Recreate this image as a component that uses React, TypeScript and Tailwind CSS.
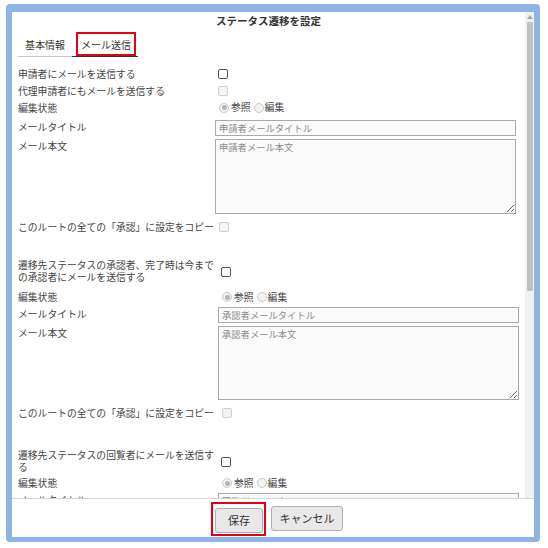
import React from "react";

type Width = "w-[197px]" | "w-[200px]";

// small square checkbox, drawn so the size matches the screenshot
function Check({ disabled = false }: { disabled?: boolean }) {
  return (
    <span
      className={`block w-[10px] h-[10px] rounded-[2px] border ${
        disabled ? "border-[#cfcfcf] bg-[#f4f4f4]" : "border-[#555] bg-white"
      }`}
    />
  );
}

function Radio({ checked = false }: { checked?: boolean }) {
  return (
    <span className="w-[10px] h-[10px] rounded-full border border-[#c9c9c9] bg-[#f3f3f3] flex items-center justify-center">
      {checked && <span className="w-[5px] h-[5px] rounded-full bg-[#b4b4b4]" />}
    </span>
  );
}

function EditState() {
  return (
    <div className="ml-[4px] flex items-center text-[9.8px]">
      <Radio checked />
      <span className="ml-[2px] text-[#444]">参照</span>
      <span className="ml-[3px]">
        <Radio />
      </span>
      <span className="ml-[1px] text-[#444]">編集</span>
    </div>
  );
}

function Row({
  label,
  lw,
  className,
  children,
}: {
  label: React.ReactNode;
  lw: Width;
  className: string;
  children?: React.ReactNode;
}) {
  return (
    <div className={`flex ${className}`}>
      <div className={`${lw} shrink-0 text-[9.8px] leading-[12px] text-[#444]`}>
        {label}
      </div>
      {children}
    </div>
  );
}

function TitleInput({ text }: { text: string }) {
  return (
    <input
      readOnly
      placeholder={text}
      className="w-[301px] h-[16px] border border-[#a9a9a9] bg-[#fafafa] px-[3px] text-[9.3px] outline-none placeholder:text-[#8a8a8a]"
    />
  );
}

function BodyInput({ text, h }: { text: string; h: "h-[75px]" | "h-[74px]" }) {
  return (
    <textarea
      readOnly
      placeholder={text}
      className={`w-[301px] ${h} border border-[#a9a9a9] bg-[#fafafa] px-[3px] py-[1px] text-[9.3px] leading-[12px] outline-none resize placeholder:text-[#8a8a8a]`}
    />
  );
}

export default function App() {
  return (
    <div className="w-[548px] h-[548px] bg-white pt-[4px] pl-[6px] font-['Noto_Sans_CJK_JP','Noto_Sans',sans-serif] text-[#333]">
      <div className="w-[534px] h-[538px] rounded-[4px] border-[#8db4e2] border-t-[8px] border-x-[6px] border-b-[5px] bg-white flex flex-col">
        {/* scrolling body */}
        <div className="flex h-[486px] overflow-hidden">
          <div className="flex-1 overflow-hidden pl-[6px]">
            <div className="h-[17px] pr-[6px] flex items-center justify-center text-[10.5px] font-bold text-[#333]">
              ステータス遷移を設定
            </div>

            {/* tabs */}
            <div className="mt-[3px] flex items-end text-[10px]">
              <div className="h-[25px] px-[7px] border-b border-[#c8c8c8] flex items-center text-[#333]">
                基本情報
              </div>
              <div className="h-[25px] pl-[4px] pr-[2px] border-b border-[#333] flex items-start">
                <div className="h-[24px] border-2 border-[#e60012] px-[3px] flex items-center text-[#333]">
                  メール送信
                </div>
              </div>
            </div>

            {/* 申請者 */}
            <div className="mt-[8px]">
              <Row lw="w-[197px]" className="h-[17px] items-center" label="申請者にメールを送信する">
                <span className="ml-[3px]">
                  <Check />
                </span>
              </Row>
              <Row lw="w-[197px]" className="h-[17px] items-center" label="代理申請者にもメールを送信する">
                <span className="ml-[3px]">
                  <Check disabled />
                </span>
              </Row>
              <Row lw="w-[197px]" className="h-[17px] items-center" label="編集状態">
                <EditState />
              </Row>
              <Row lw="w-[197px]" className="h-[21px] pt-[4px] items-start" label={<div className="pt-[1px]">メールタイトル</div>}>
                <TitleInput text="申請者メールタイトル" />
              </Row>
              <Row lw="w-[197px]" className="pt-[2px] items-start" label={<div className="pt-[1px]">メール本文</div>}>
                <BodyInput text="申請者メール本文" h="h-[75px]" />
              </Row>
              <Row lw="w-[197px]" className="h-[26px] items-center" label="このルートの全ての「承認」に設定をコピー">
                <span className="ml-[4px]">
                  <Check disabled />
                </span>
              </Row>
            </div>

            {/* 承認者 */}
            <div className="mt-[19px]">
              <Row
                lw="w-[200px]"
                className="h-[24px] items-center"
                label="遷移先ステータスの承認者、完了時は今までの承認者にメールを送信する"
              >
                <span className="ml-[3px] mt-[2px]">
                  <Check />
                </span>
              </Row>
              <Row lw="w-[200px]" className="mt-[5px] h-[18px] items-center" label="編集状態">
                <EditState />
              </Row>
              <Row lw="w-[200px]" className="h-[18px] pt-[1px] items-start" label={<div className="pt-[1px]">メールタイトル</div>}>
                <TitleInput text="承認者メールタイトル" />
              </Row>
              <Row lw="w-[200px]" className="pt-[2px] items-start" label={<div className="pt-[1px]">メール本文</div>}>
                <BodyInput text="承認者メール本文" h="h-[74px]" />
              </Row>
              <Row lw="w-[200px]" className="h-[26px] items-center" label="このルートの全ての「承認」に設定をコピー">
                <span className="ml-[4px]">
                  <Check disabled />
                </span>
              </Row>
            </div>

            {/* 回覧者 */}
            <div className="mt-[23px]">
              <Row
                lw="w-[200px]"
                className="h-[24px] items-center"
                label="遷移先ステータスの回覧者にメールを送信する"
              >
                <span className="ml-[3px] mt-[2px]">
                  <Check />
                </span>
              </Row>
              <Row lw="w-[200px]" className="mt-[1px] h-[18px] items-center" label="編集状態">
                <EditState />
              </Row>
              <Row lw="w-[200px]" className="h-[18px] pt-[1px] items-start" label={<div className="pt-[1px]">メールタイトル</div>}>
                <TitleInput text="回覧者メールタイトル" />
              </Row>
            </div>
          </div>

          {/* scrollbar */}
          <div className="w-[9px] bg-[#f1f1f1] flex flex-col items-center">
            <div className="h-[9px] flex items-center justify-center">
              <span className="w-0 h-0 border-x-[3px] border-x-transparent border-b-[4px] border-b-[#a3a3a3]" />
            </div>
            <div className="mt-[1px] w-[6px] h-[269px] bg-[#c1c1c1]" />
          </div>
        </div>

        {/* footer */}
        <div className="flex-1 border-t border-[#d4d4d4] pl-[199px] pt-[3px] flex items-start">
          <div className="border-2 border-[#e60012] pt-[2px] pb-[1px] pl-[2px] pr-[1px]">
            <button className="w-[48px] h-[25px] rounded-[3px] border border-[#adadad] bg-[#e8e8e8] text-[11px] text-[#333]">
              保存
            </button>
          </div>
          <button className="ml-[5px] mt-[4px] w-[72px] h-[25px] rounded-[3px] border border-[#adadad] bg-[#e8e8e8] text-[11px] text-[#333]">
            キャンセル
          </button>
        </div>
      </div>
    </div>
  );
}
